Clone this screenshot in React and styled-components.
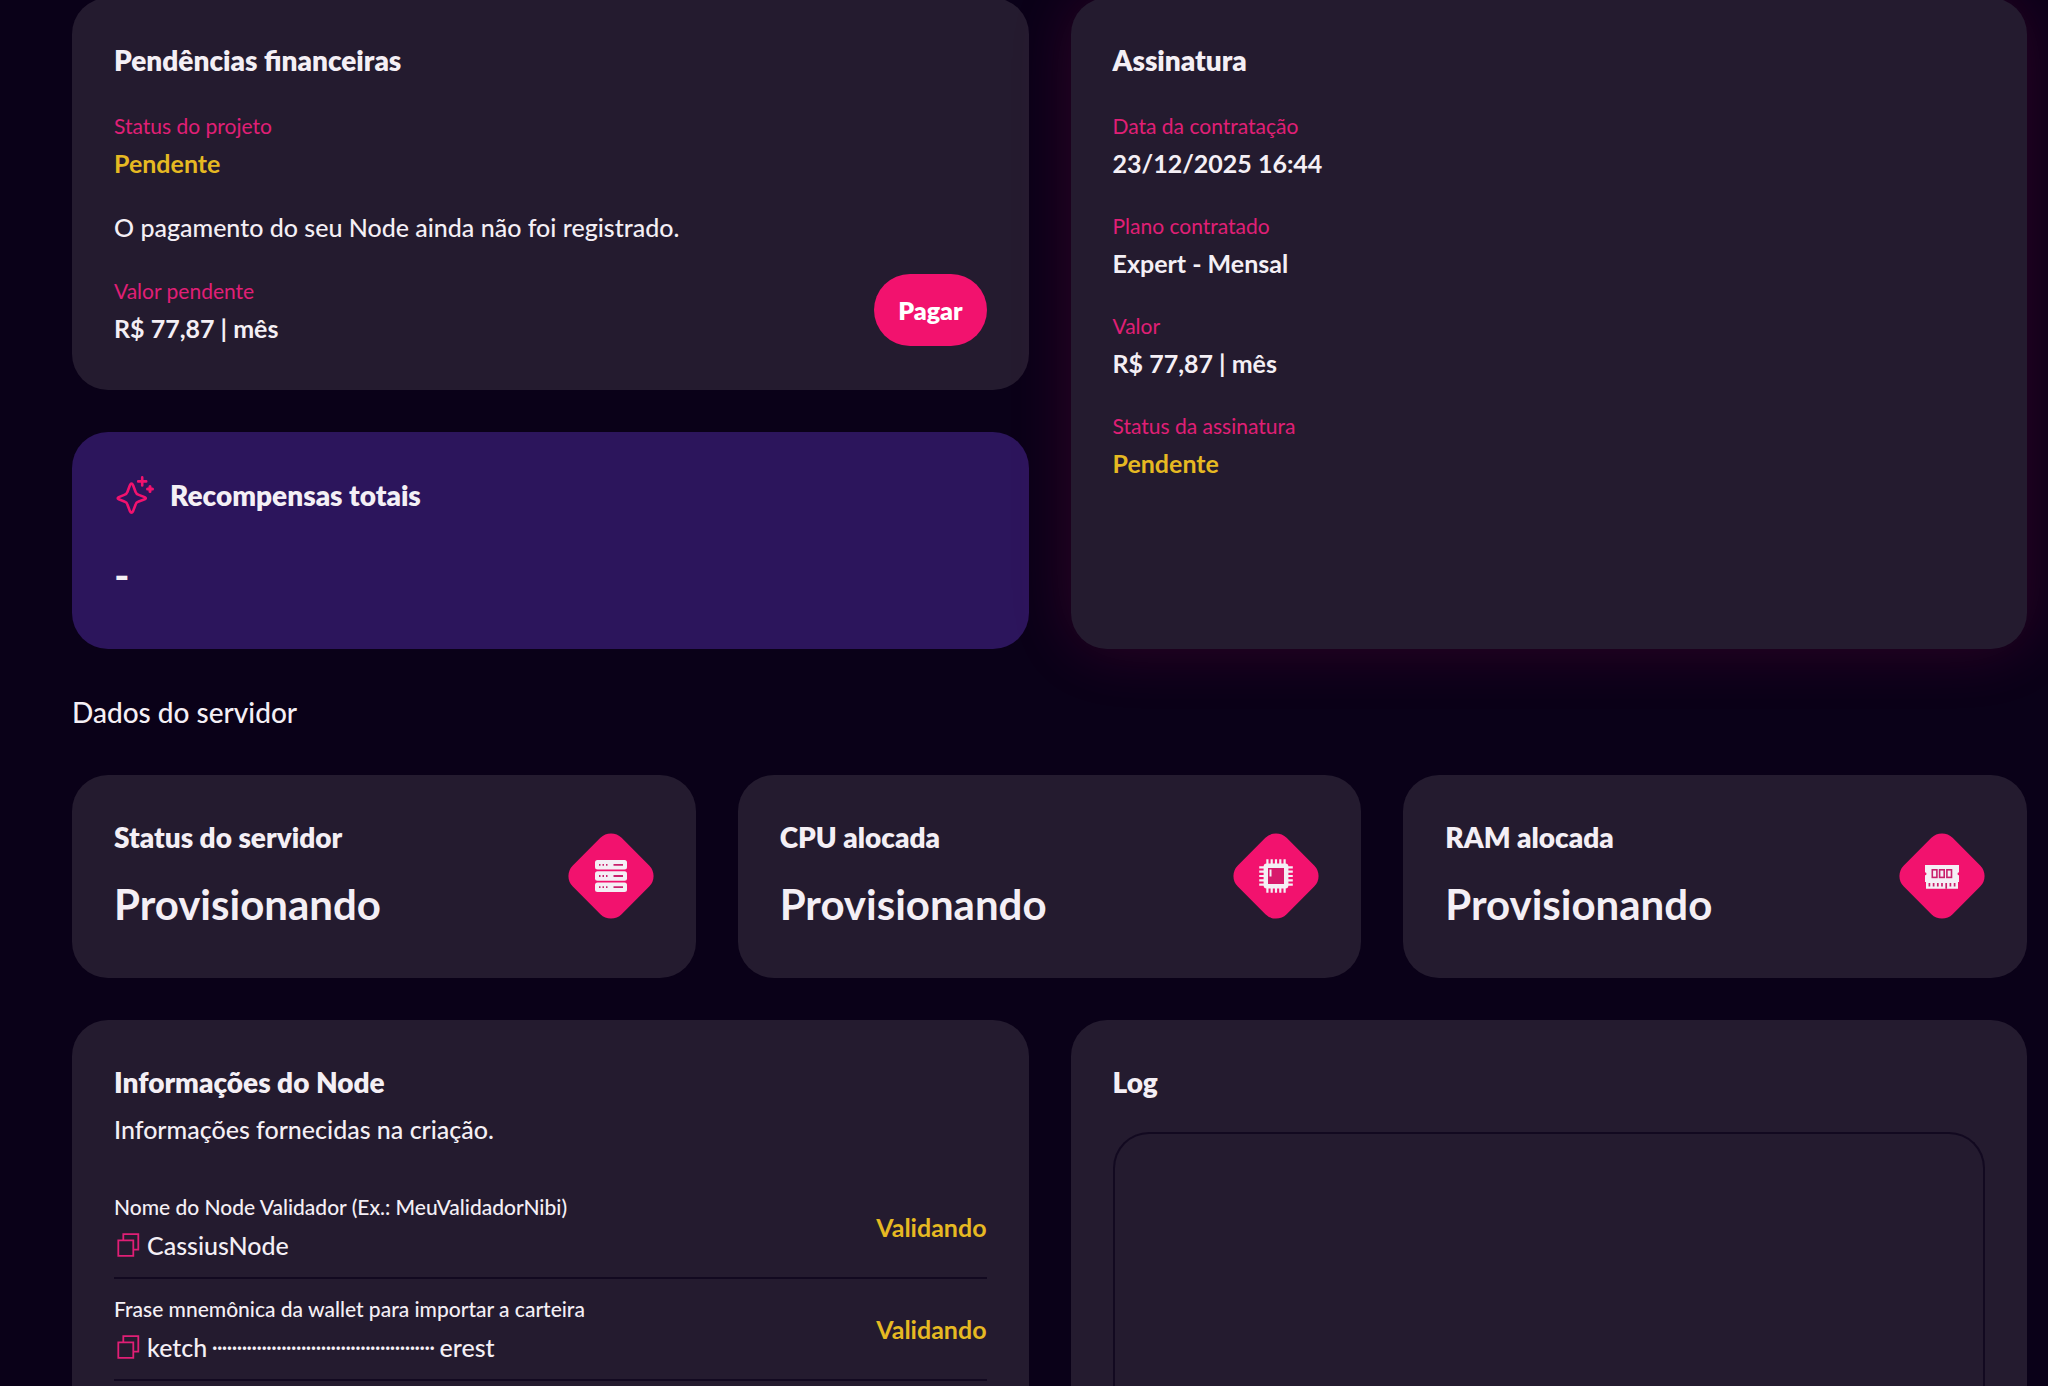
import React from 'react'
import styled, { createGlobalStyle } from 'styled-components'

const GlobalStyle = createGlobalStyle`
  * {
    box-sizing: border-box;
    margin: 0;
  }
  body {
    height: 100vh;
    overflow: hidden;
    background-color: #0a0118;
    color: #f4eff5;
    font-family: Lato, "Liberation Sans", sans-serif;
    font-size: 25px;
  }
`

const stats = [
  { title: 'Status do servidor', value: 'Provisionando', icon: 'server' },
  { title: 'CPU alocada', value: 'Provisionando', icon: 'cpu' },
  { title: 'RAM alocada', value: 'Provisionando', icon: 'ram' },
]

const nodeInfo = [
  { label: 'Nome do Node Validador (Ex.: MeuValidadorNibi)', start: 'CassiusNode' },
  { label: 'Frase mnemônica da wallet para importar a carteira', start: 'ketch', end: 'erest' },
]

const hidden = '·'.repeat(45)

const SparkleIcon = () => (
  <svg width="42" height="42" viewBox="0 0 42 42" fill="none" stroke="#f2126e" strokeWidth="2.6" strokeLinejoin="round" strokeLinecap="round" aria-hidden="true">
    <path d="M15.9 11.3 13.3 18.2Q12.7 20 10.9 20.6L4.8 23.1Q2.6 24.2 4.8 25.3L10.9 27.8Q12.7 28.4 13.3 30.2L15.9 37.1Q17.5 40.5 19.1 37.1L21.7 30.2Q22.3 28.4 24.1 27.8L30.7 25.3Q32.9 24.2 30.7 23.1L24.1 20.6Q22.3 20 21.7 18.2L19.1 11.3Q17.5 8 15.9 11.3z" />
    <path d="M28.2 3.4v8M24.2 7.4h8" />
    <path d="M36 12.6v5M33.5 15.1h5" strokeWidth="3" />
  </svg>
)

const CopyIcon = () => (
  <svg width="28" height="28" viewBox="0 0 28 28" fill="none" stroke="#e01f76" strokeWidth="1.8" aria-hidden="true">
    <path d="M4.3 9.3h15v15.5h-15z" />
    <path d="M9.3 9.3V3.2h15v15.5h-5" />
  </svg>
)

const ServerShape = () => (
  <g>
    {[27, 38.2, 49.4].map((y) => (
      <g key={y}>
        <rect x="27" y={y} width="32" height="9.6" rx="2.5" fill="#f4eff5" />
        <path d={`M31 ${y + 4.8}h1.5M34.5 ${y + 4.8}h1.5M38 ${y + 4.8}h1.5M45.5 ${y + 4.8}h9.5`} stroke="#c9206c" strokeWidth="1.8" />
      </g>
    ))}
  </g>
)

const CpuShape = () => (
  <g>
    {[34.4, 38.7, 43, 47.3, 51.6].map((p) => (
      <path key={p} d={`M${p} 26.2v33.6M26.2 ${p}h33.6`} stroke="#f4eff5" strokeWidth="2.2" />
    ))}
    <rect x="30.6" y="30.6" width="24.8" height="24.8" rx="3" fill="#f4eff5" />
    <rect x="35" y="35" width="16" height="16" fill="#d81a6c" />
    <path d="M37.5 36.5v7" stroke="#f4eff5" strokeWidth="2" />
  </g>
)

const RamShape = () => (
  <g>
    <path d="M26 32h34v7.3a1.5 1.5 0 0 0 0 3V49h-1v6.8H27V49h-1v-6.7a1.5 1.5 0 0 0 0-3z" fill="#f4eff5" />
    {[33.3, 40.6, 47.9].map((x) => (
      <rect key={x} x={x} y="36.8" width="4.6" height="7.6" fill="#f4eff5" stroke="#c9206c" strokeWidth="1.6" />
    ))}
    <path d="M30.4 50v3.4M34.6 50v3.4M38.8 50v3.4M43 50v3.4M47.2 50v5.8M51.4 50v3.4M55.6 50v3.4" stroke="#c9206c" strokeWidth="1.7" />
  </g>
)

const shapes = { server: ServerShape, cpu: CpuShape, ram: RamShape }

const DiamondIcon = ({ name }) => {
  const Shape = shapes[name]
  return (
    <svg width="86" height="86" viewBox="0 0 86 86" aria-hidden="true">
      <rect x="8.5" y="8.5" width="69" height="69" rx="15" fill="#f2126e" transform="rotate(45 43 43)" />
      <Shape />
    </svg>
  )
}

const Field = ({ label, value, pending }) => (
  <div>
    <Label>{label}</Label>
    <Value $pending={pending}>{value}</Value>
  </div>
)

const App = () => {
  return (
    <Page>
      <GlobalStyle />
      <Halves>
        <Column>
          <Card>
            <Title>Pendências financeiras</Title>
            <Fields>
              <Field label="Status do projeto" value="Pendente" pending />
              <Text>O pagamento do seu Node ainda não foi registrado.</Text>
              <Between>
                <Field label="Valor pendente" value="R$ 77,87 | mês" />
                <PayButton type="button">Pagar</PayButton>
              </Between>
            </Fields>
          </Card>
          <RewardsCard>
            <RewardsHeader>
              <SparkleIcon />
              <Title>Recompensas totais</Title>
            </RewardsHeader>
            <BigValue>-</BigValue>
          </RewardsCard>
        </Column>
        <GlowCard>
          <Title>Assinatura</Title>
          <Fields>
            <Field label="Data da contratação" value="23/12/2025 16:44" />
            <Field label="Plano contratado" value="Expert - Mensal" />
            <Field label="Valor" value="R$ 77,87 | mês" />
            <Field label="Status da assinatura" value="Pendente" pending />
          </Fields>
        </GlowCard>
      </Halves>

      <SectionTitle>Dados do servidor</SectionTitle>

      <Thirds>
        {stats.map(({ title, value, icon }) => (
          <StatCard key={icon}>
            <Stat>
              <Title>{title}</Title>
              <BigValue>{value}</BigValue>
            </Stat>
            <DiamondIcon name={icon} />
          </StatCard>
        ))}
      </Thirds>

      <Halves>
        <Card>
          <Title>Informações do Node</Title>
          <Subtitle>Informações fornecidas na criação.</Subtitle>
          <InfoList>
            {nodeInfo.map(({ label, start, end }) => (
              <InfoRow key={label}>
                <div>
                  <InfoLabel>{label}</InfoLabel>
                  <InfoValue>
                    <CopyButton type="button" aria-label="Copiar">
                      <CopyIcon />
                    </CopyButton>
                    <span>{start}</span>
                    {end && <Dots>{hidden}</Dots>}
                    {end && <span>{end}</span>}
                  </InfoValue>
                </div>
                <Value as="span" $pending>Validando</Value>
              </InfoRow>
            ))}
          </InfoList>
        </Card>
        <LogCard>
          <Title>Log</Title>
          <LogBox />
        </LogCard>
      </Halves>
    </Page>
  )
}

export default App

const Page = styled.main`
  display: flex;
  flex-direction: column;
  gap: 42px;
  margin-top: -2px;
  padding: 0 21px 0 72px;
`
const Halves = styled.section`
  display: grid;
  grid-template-columns: 1fr 1fr;
  gap: 42px;
`
const Thirds = styled.section`
  display: grid;
  grid-template-columns: repeat(3, 1fr);
  gap: 42px;
`
const Column = styled.div`
  display: flex;
  flex-direction: column;
  gap: 42px;
`
const Card = styled.article`
  padding: 42px 42px 43px;
  border-radius: 36px;
  background-color: #241b2f;
`
const GlowCard = styled(Card)`
  box-shadow: 0 0 64px rgba(242, 18, 110, 0.16);
`
const RewardsCard = styled(Card)`
  display: flex;
  flex-direction: column;
  gap: 28px;
  background-color: #2c155c;
`
const RewardsHeader = styled.div`
  display: flex;
  align-items: center;
  gap: 14px;
`
const StatCard = styled(Card)`
  display: flex;
  align-items: center;
  justify-content: space-between;
`
const Stat = styled.div`
  display: flex;
  flex-direction: column;
  gap: 16px;
`
const LogCard = styled(Card)`
  display: flex;
  flex-direction: column;
`
const LogBox = styled.div`
  flex: 1;
  margin-top: 30px;
  border: 2px solid #120920;
  border-bottom: 0;
  border-radius: 36px 36px 0 0;
  margin-bottom: -43px;
`
const Title = styled.h2`
  font-size: 28px;
  font-weight: 800;
  line-height: 40px;
`
const SectionTitle = styled.h1`
  font-size: 28px;
  font-weight: 500;
  line-height: 42px;
`
const Fields = styled.div`
  display: flex;
  flex-direction: column;
  gap: 26px;
  margin-top: 28px;
`
const Label = styled.p`
  color: #e01f76;
  font-size: 21px;
  line-height: 36px;
`
const Value = styled.p`
  color: ${({ $pending }) => ($pending ? '#e6b922' : '#f4eff5')};
  font-weight: 700;
  line-height: 38px;
`
const Text = styled.p`
  font-weight: 500;
  line-height: 39px;
`
const Subtitle = styled(Text)`
  margin-top: 8px;
`
const Between = styled.div`
  display: flex;
  align-items: center;
  justify-content: space-between;
`
const PayButton = styled.button`
  padding: 17px 24px;
  border: 0;
  border-radius: 36px;
  background-color: #f2126e;
  color: #ffffff;
  font: inherit;
  font-weight: 800;
  line-height: 38px;
  cursor: pointer;
`
const BigValue = styled.p`
  font-size: 42px;
  font-weight: 700;
  line-height: 62px;
`
const InfoList = styled.ul`
  margin-top: 28px;
  padding: 0;
  list-style: none;
`
const InfoRow = styled.li`
  display: flex;
  align-items: center;
  justify-content: space-between;
  padding: 12px 0;
  border-bottom: 2px solid #120920;
`
const InfoLabel = styled.p`
  font-size: 21px;
  font-weight: 500;
  line-height: 36px;
`
const InfoValue = styled.div`
  display: flex;
  align-items: center;
  gap: 5px;
  font-weight: 500;
  line-height: 40px;
`
const Dots = styled.span`
  font-size: 18px;
  font-weight: 700;
`
const CopyButton = styled.button`
  display: flex;
  padding: 0;
  border: 0;
  background: none;
  cursor: pointer;
`
